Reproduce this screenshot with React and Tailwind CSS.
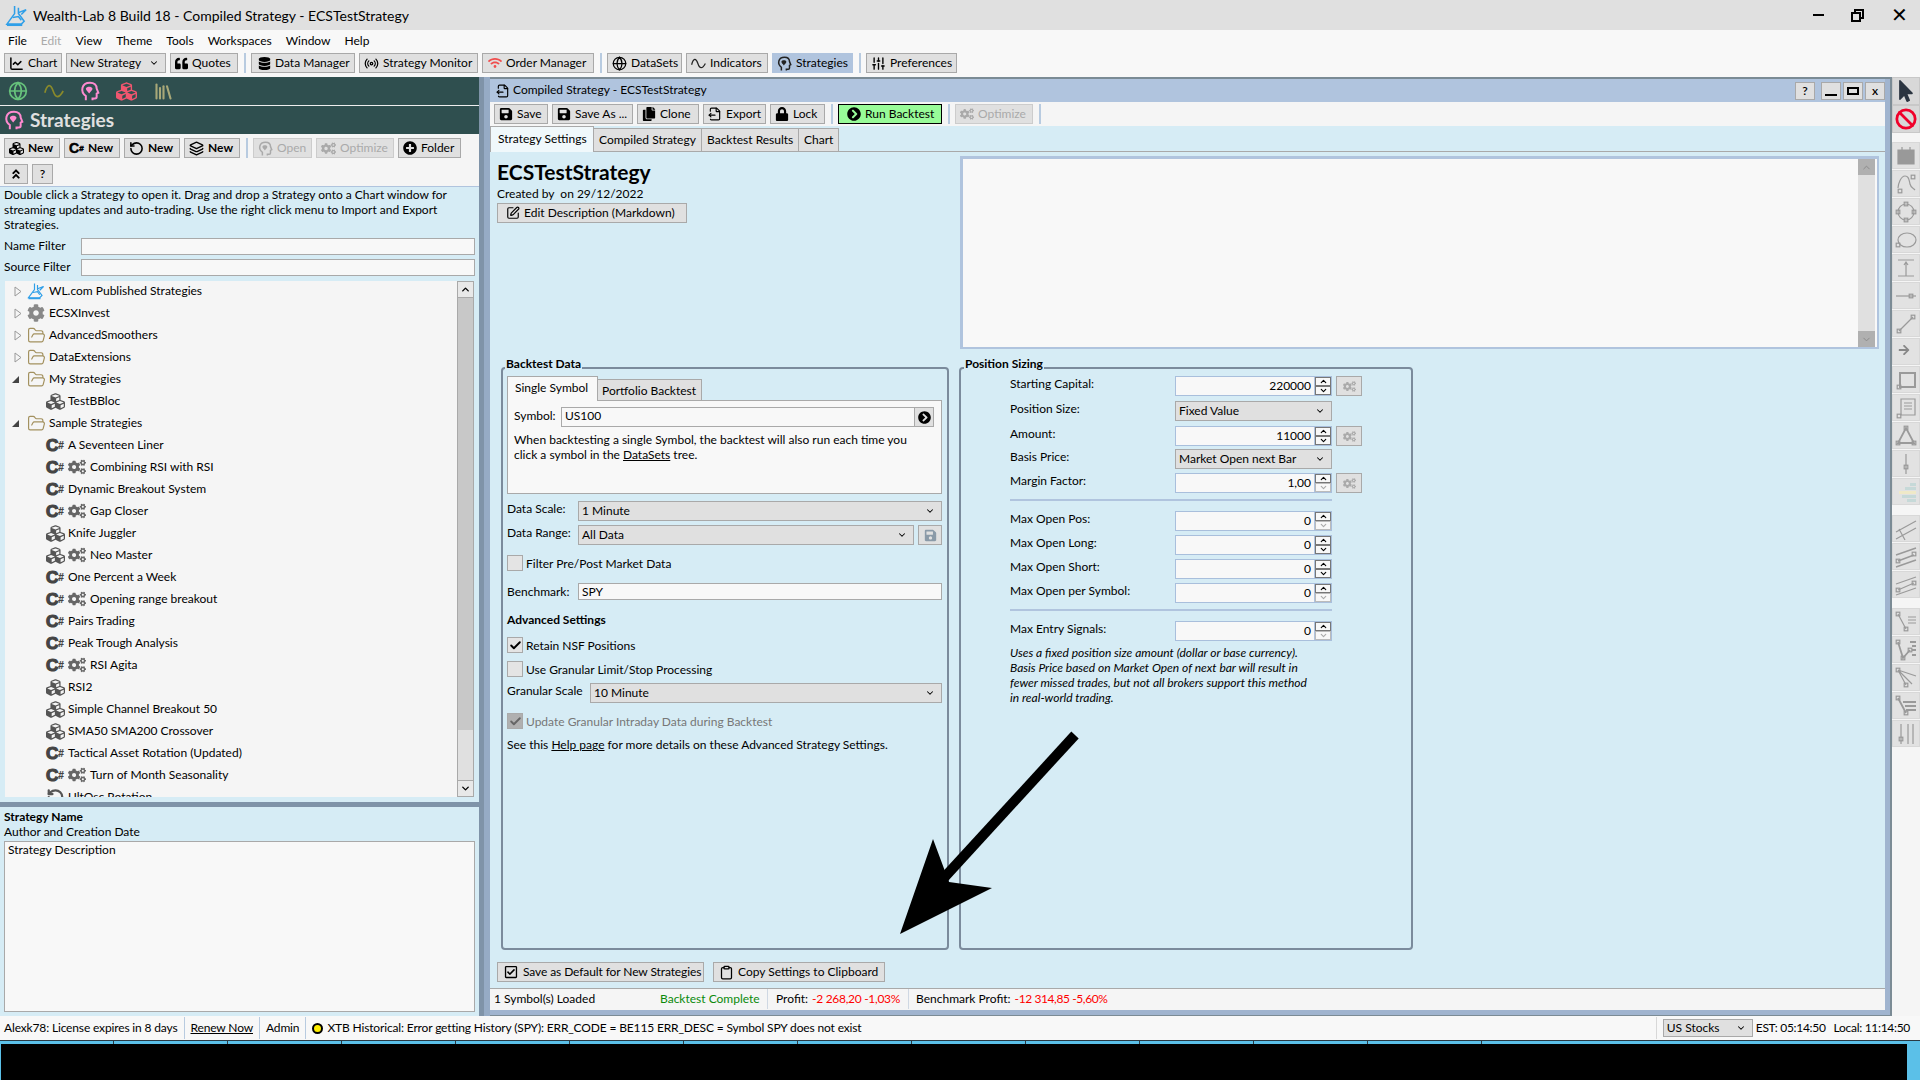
import React from 'react';
import { ChartLine, Radio, Globe, SlidersVertical, Layers, RotateCcw, FileOutput, SquarePen, FolderOpen, Clipboard, ChevronDown, ChevronUp, Library, Check, Ban } from 'lucide-react';
import { FaQuoteLeft, FaDatabase, FaWifi, FaCubes, FaCogs, FaCog, FaPlusCircle, FaAngleDoubleUp, FaSave, FaCopy, FaLock, FaChevronCircleRight, FaMousePointer, FaArrowRight, FaRegCheckSquare } from 'react-icons/fa';

const Flask = ({ size = 24 }) => (
  <svg width={size} height={size} viewBox="0 0 24 24" fill="none" stroke="#2f9fe8" strokeWidth="1.6">
    <path d="M10 2v8L2 21h15l3-3-6-8V4" />
    <path d="M14 9l8-3-5 5M8 14l6-1 3 4" />
    <path d="M2 22h16" strokeWidth="2" />
  </svg>
);

const Head = ({ size = 16, color = '#222' }) => (
  <svg width={size} height={size} viewBox="0 0 24 24" fill="none" stroke={color} strokeWidth="2.4">
    <path d="M7 23v-5C3 15 2 12 3 8c1-4 5-6 9-6 5 0 8 3 8 7l2 5-2 1v4c0 1-1 2-2 2h-3v2" />
    <path d="M7 9c1-3 7-3 8 0 0 2-2 3-4 6-2-3-4-4-4-6z" fill={color} stroke="none" />
  </svg>
);

const Wave = ({ size = 16, color = '#222' }) => (
  <svg width={size} height={size} viewBox="0 0 24 24" fill="none" stroke={color} strokeWidth="2">
    <path d="M1 14C4 3 8 3 11 12s7 9 12 0" />
  </svg>
);

const CSharp = () => (
  <span className="w-[19px] shrink-0 font-['Liberation_Sans',sans-serif] font-bold text-[17px] leading-none text-[#444] [-webkit-text-stroke:1.2px_#444]">
    C<span className="text-[10px] align-[2px] [-webkit-text-stroke:0.2px_#444]">#</span>
  </span>
);

const Sep = () => <div className="w-[2px] h-5 mx-[1.5px] bg-[#b8cbe0]" />;

const tones = {
  normal: 'border-[#a9a9a9] bg-[#e0e0e0]',
  off: 'border-[#cccccc] bg-[#e0e0e0] text-[#aaaaaa]',
  run: 'border-black bg-[#98fb98]',
  active: 'border-[#b0c4de] bg-[#b0c4de]',
};

const Btn = ({ w, icon, children, tone = 'normal', className = '' }) => (
  <div className={`${w} h-5 shrink-0 flex items-center gap-[4px] px-[4px] border whitespace-nowrap [&>svg]:shrink-0 ${tones[tone]} ${className}`}>
    {icon}
    {children}
  </div>
);

const Select = ({ w = 'flex-1', value, className = '' }) => (
  <div className={`${w} h-5 flex items-center justify-between pl-[3px] pr-[6px] border border-[#a9a9a9] bg-[#e0e0e0] ${className}`}>
    <span>{value}</span>
    <ChevronDown size={10} strokeWidth={2.5} />
  </div>
);

const Spin = ({ off }) => (
  <div className="w-[17px] flex flex-col shrink-0 border-l border-[#b0c4de]">
    <div className="h-[8px] flex-1 flex items-center justify-center border border-[#777]"><ChevronUp size={9} strokeWidth={3} /></div>
    <div className={`h-[8px] flex-1 flex items-center justify-center border ${off ? 'border-[#bbb] text-[#aaa]' : 'border-[#777]'}`}><ChevronDown size={9} strokeWidth={3} /></div>
  </div>
);

const GearBtn = () => (
  <div className="w-[26px] h-5 ml-[4px] flex items-center justify-center border border-[#a9a9a9] bg-[#e0e0e0] text-[#aaa]">
    <FaCogs size={13} />
  </div>
);

const NumRow = ({ label, value, off, gear, className = '' }) => (
  <div className={`flex h-5 ${className}`}>
    <div className="w-[165px] leading-[15px]">{label}</div>
    <div className="w-[157px] flex border border-[#a9bfdc] bg-[#f8f8f8]">
      <div className="flex-1 text-right pr-[3px] leading-[18px]">{value}</div>
      <Spin off={off} />
    </div>
    {gear && <GearBtn />}
  </div>
);

const SelRow = ({ label, value, className = '' }) => (
  <div className={`flex h-5 ${className}`}>
    <div className="w-[165px] leading-[16px]">{label}</div>
    <Select w="w-[157px]" value={value} />
  </div>
);

const CheckRow = ({ checked, off, label, className = '' }) => (
  <div className={`flex h-4 items-center gap-[3px] ${className}`}>
    <div className={`w-4 h-4 flex items-center justify-center border ${off ? 'border-[#aaa] bg-[#b0b0b0] text-[#666]' : 'border-[#a9a9a9] bg-[#e4e4e4]'}`}>
      {checked && <Check size={13} strokeWidth={3.5} />}
    </div>
    <span className={`pt-px ${off ? 'text-[#777]' : ''}`}>{label}</span>
  </div>
);

const treeRows = [
  { open: false, icon: <Flask size={18} />, name: 'WL.com Published Strategies' },
  { open: false, icon: <FaCog size={18} className="text-[#888]" />, name: 'ECSXInvest' },
  { open: false, folder: true, name: 'AdvancedSmoothers' },
  { open: false, folder: true, name: 'DataExtensions' },
  { open: true, folder: true, name: 'My Strategies' },
  { kind: 'b', name: 'TestBBloc' },
  { open: true, folder: true, name: 'Sample Strategies' },
  { kind: 'c', name: 'A Seventeen Liner' },
  { kind: 'c', gear: true, name: 'Combining RSI with RSI' },
  { kind: 'c', name: 'Dynamic Breakout System' },
  { kind: 'c', gear: true, name: 'Gap Closer' },
  { kind: 'b', name: 'Knife Juggler' },
  { kind: 'b', gear: true, name: 'Neo Master' },
  { kind: 'c', name: 'One Percent a Week' },
  { kind: 'c', gear: true, name: 'Opening range breakout' },
  { kind: 'c', name: 'Pairs Trading' },
  { kind: 'c', name: 'Peak Trough Analysis' },
  { kind: 'c', gear: true, name: 'RSI Agita' },
  { kind: 'b', name: 'RSI2' },
  { kind: 'b', name: 'Simple Channel Breakout 50' },
  { kind: 'b', name: 'SMA50 SMA200 Crossover' },
  { kind: 'c', name: 'Tactical Asset Rotation (Updated)' },
  { kind: 'c', gear: true, name: 'Turn of Month Seasonality' },
  { kind: 'r', name: 'UltOsc Rotation' },
];

const TreeRow = ({ row }) => {
  if (row.kind) {
    return (
      <div className="h-[22px] shrink-0 flex items-center pl-[41px] leading-[20px]">
        {row.kind === 'c' && <CSharp />}
        {row.kind === 'b' && <FaCubes size={19} className="w-[19px] shrink-0 text-[#555]" />}
        {row.kind === 'r' && <RotateCcw size={18} strokeWidth={3} className="w-[19px] shrink-0 text-[#555]" />}
        {row.gear && <FaCogs size={18} className="ml-[3px] shrink-0 text-[#666]" />}
        <span className={row.gear ? 'ml-[4px]' : 'ml-[3px]'}>{row.name}</span>
      </div>
    );
  }
  return (
    <div className="h-[22px] shrink-0 flex items-center pl-[7px] leading-[20px]">
      <div className="w-[15px] shrink-0">
        {row.open
          ? <div className="w-0 h-0 border-l-[7px] border-l-transparent border-b-[7px] border-b-[#444]" />
          : <svg width="9" height="11" viewBox="0 0 9 11" className="ml-[2px]"><path d="M1 1l6 4.5L1 10z" fill="#f5f5f5" stroke="#999" /></svg>}
      </div>
      <div className="w-[18px] shrink-0 flex items-center justify-center">
        {row.folder ? <FolderOpen size={19} strokeWidth={1.5} className="shrink-0 text-[#a3915f]" /> : row.icon}
      </div>
      <span className="ml-[4px]">{row.name}</span>
    </div>
  );
};

const LeftPanel = () => (
  <div className="w-[479px] shrink-0 flex flex-col bg-[#d6ecf5]">
    <div className="h-[28px] flex items-center gap-[16px] pl-[8px] bg-[#2f4f4f]">
      <Globe size={20} strokeWidth={2} className="text-[#67c27c]" />
      <Wave size={20} color="#8a8a2a" />
      <Head size={20} color="#ff8ad0" />
      <FaCubes size={21} className="text-[#f0566f]" />
      <Library size={21} strokeWidth={2.4} className="text-[#a8a878]" />
    </div>
    <div className="h-px bg-[#eee]" />
    <div className="h-[28px] flex items-center gap-[6px] pl-[4px] bg-[#2f4f4f]">
      <Head size={20} color="#ff8ad0" />
      <span className="font-bold text-[19px] text-[#e0e0e0]">Strategies</span>
    </div>
    <div className="h-[53px] flex flex-col gap-[6px] pt-[4px] pl-[4px] bg-[#f5f5f5] border-b border-[#b0c4de]">
      <div className="flex gap-[4px] items-center">
        <Btn w="w-[56px]" className="font-bold" icon={<FaCubes size={15} />}>New</Btn>
        <Btn w="w-[56px]" className="font-bold gap-[3px]" icon={<span className="w-[15px] font-['Liberation_Sans',sans-serif] font-bold text-[14px] leading-none [-webkit-text-stroke:0.5px_#000]">C<span className="text-[8px] align-[2px]">#</span></span>}>New</Btn>
        <Btn w="w-[56px]" className="font-bold" icon={<RotateCcw size={15} strokeWidth={2.5} />}>New</Btn>
        <Btn w="w-[56px]" className="font-bold" icon={<Layers size={15} strokeWidth={2.2} />}>New</Btn>
        <Sep />
        <Btn w="w-[59px]" tone="off" icon={<Head size={15} color="#aaa" />}>Open</Btn>
        <Btn w="w-[78px]" tone="off" icon={<FaCogs size={15} />}>Optimize</Btn>
        <Btn w="w-[63px]" icon={<FaPlusCircle size={14} />}>Folder</Btn>
      </div>
      <div className="flex gap-[4px]">
        <Btn w="w-[24px]" className="justify-center" icon={<FaAngleDoubleUp size={12} />} />
        <Btn w="w-[21px]" className="justify-center font-semibold">?</Btn>
      </div>
    </div>
    <div className="px-[4px] leading-[15px] h-[46px]">
      Double click a Strategy to open it. Drag and drop a Strategy onto a Chart window for streaming updates and auto-trading. Use the right click menu to Import and Export Strategies.
    </div>
    <div className="flex h-[17px] mt-[5px] pl-[4px] pr-[4px]">
      <span className="w-[77px] leading-[15px]">Name Filter</span>
      <div className="flex-1 border border-[#a9a9a9] bg-[#f8f8f8]" />
    </div>
    <div className="flex h-[17px] mt-[4px] pl-[4px] pr-[4px]">
      <span className="w-[77px] leading-[15px]">Source Filter</span>
      <div className="flex-1 border border-[#a9a9a9] bg-[#f8f8f8]" />
    </div>
    <div className="flex h-[516px] mt-[5px] ml-[5px] mr-[5px] bg-[#f5f5f5]">
      <div className="flex-1 flex flex-col overflow-hidden">
        <div className="-mt-px flex flex-col">
          {treeRows.map((row) => <TreeRow key={row.name} row={row} />)}
        </div>
      </div>
      <div className="w-[17px] flex flex-col border border-[#a9a9a9] bg-[#e0e0e0]">
        <div className="h-[16px] flex items-center justify-center bg-[#e8e8e8] border-b border-[#a9a9a9]"><ChevronUp size={11} strokeWidth={3} /></div>
        <div className="h-[432px] bg-[#c8c8c8]" />
        <div className="flex-1" />
        <div className="h-[16px] flex items-center justify-center bg-[#e8e8e8] border-t border-[#a9a9a9]"><ChevronDown size={11} strokeWidth={3} /></div>
      </div>
    </div>
    <div className="h-[5px] mt-[5px] bg-[#7f93a8]" />
    <div className="pl-[4px] pt-[2px] font-bold leading-[16px]">Strategy Name</div>
    <div className="pl-[4px] h-[15px] leading-[13px]">Author and Creation Date</div>
    <div className="mt-[1px] ml-[4px] mr-[4px] h-[171px] px-[3px] border border-[#a9a9a9] bg-[#f8f8f8] leading-[16px]">Strategy Description</div>
  </div>
);

const BacktestData = () => (
  <div className="w-[448px] border-2 border-[#7b8b9c] rounded-[4px] pl-[4px] pr-[5px]">
    <div className="w-fit -mt-[13px] -ml-[2px] h-4 px-[1px] bg-[#d6ecf5] font-bold leading-[16px]">Backtest Data</div>
    <div className="flex items-end mt-[3px] h-[25px]">
      <div className="w-[91px] h-[25px] pl-[7px] leading-[22px] border border-b-0 border-[#a9a9a9] bg-[#f8f8f8] relative z-10 -mb-px">Single Symbol</div>
      <div className="w-[104px] h-[21px] pl-[4px] leading-[21px] border border-l-0 border-b-0 border-[#a9a9a9] bg-[#e0e0e0]">Portfolio Backtest</div>
    </div>
    <div className="h-[94px] border border-[#a9a9a9] bg-[#f8f8f8] px-[6px] pt-[6px]">
      <div className="flex h-5">
        <span className="w-[47px] leading-[17px]">Symbol:</span>
        <div className="w-[354px] pl-[3px] leading-[16px] border border-[#a9a9a9]">US100</div>
        <div className="w-[19px] flex items-center justify-center border border-l-0 border-[#a9a9a9] bg-[#e0e0e0]"><FaChevronCircleRight size={13} /></div>
      </div>
      <div className="mt-[5px] leading-[15px]">
        When backtesting a single Symbol, the backtest will also run each time you<br />
        click a symbol in the <span className="underline">DataSets</span> tree.
      </div>
    </div>
    <div className="flex mt-[7px]">
      <span className="w-[71px] leading-[16px]">Data Scale:</span>
      <Select value="1 Minute" />
    </div>
    <div className="flex mt-[4px]">
      <span className="w-[71px] leading-[16px]">Data Range:</span>
      <Select value="All Data" />
      <div className="w-[24px] ml-[4px] flex items-center justify-center border border-[#a9a9a9] bg-[#e0e0e0] text-[#8a9aa8]"><FaSave size={13} /></div>
    </div>
    <CheckRow label="Filter Pre/Post Market Data" className="mt-[10px]" />
    <div className="flex mt-[12px] h-[17px]">
      <span className="w-[71px] leading-[17px]">Benchmark:</span>
      <div className="flex-1 pl-[3px] leading-[16px] border border-[#a9a9a9] bg-[#f8f8f8]">SPY</div>
    </div>
    <div className="mt-[12px] font-bold leading-[16px]">Advanced Settings</div>
    <CheckRow checked label="Retain NSF Positions" className="mt-[9px]" />
    <CheckRow label="Use Granular Limit/Stop Processing" className="mt-[8px]" />
    <div className="flex mt-[6px]">
      <span className="w-[83px] leading-[16px]">Granular Scale</span>
      <Select value="10 Minute" />
    </div>
    <CheckRow checked off label="Update Granular Intraday Data during Backtest" className="mt-[10px]" />
    <div className="mt-[8px] leading-[16px]">
      See this <span className="underline">Help page</span> for more details on these Advanced Strategy Settings.
    </div>
  </div>
);

const PositionSizing = () => (
  <div className="w-[454px] border-2 border-[#7b8b9c] rounded-[4px] pl-[49px]">
    <div className="w-fit -mt-[13px] -ml-[46px] h-4 px-[1px] bg-[#d6ecf5] font-bold leading-[16px]">Position Sizing</div>
    <NumRow label="Starting Capital:" value="220000" gear className="mt-[4px]" />
    <SelRow label="Position Size:" value="Fixed Value" className="mt-[5px]" />
    <NumRow label="Amount:" value="11000" gear className="mt-[5px]" />
    <SelRow label="Basis Price:" value="Market Open next Bar" className="mt-[3px]" />
    <NumRow label="Margin Factor:" value="1,00" off gear className="mt-[4px]" />
    <div className="w-[322px] h-[2px] mt-[6px] bg-[#b0c4de]" />
    <NumRow label="Max Open Pos:" value="0" off className="mt-[10px]" />
    <NumRow label="Max Open Long:" value="0" className="mt-[4px]" />
    <NumRow label="Max Open Short:" value="0" className="mt-[4px]" />
    <NumRow label="Max Open per Symbol:" value="0" off className="mt-[4px]" />
    <div className="w-[322px] h-[2px] mt-[6px] bg-[#b0c4de]" />
    <NumRow label="Max Entry Signals:" value="0" off className="mt-[10px]" />
    <div className="mt-[4px] italic leading-[15px] whitespace-nowrap">
      Uses a fixed position size amount (dollar or base currency).<br />
      Basis Price based on Market Open of next bar will result in<br />
      fewer missed trades, but not all brokers support this method<br />
      in real-world trading.
    </div>
  </div>
);

const StrategyWindow = () => (
  <div className="flex-1 flex flex-col border-t-2 border-t-[#7b8b95] border-r-2 border-b border-r-[#7b8b95] border-b-[#7b8b95]">
    <div className="flex-1 flex flex-col border-r-[5px] border-b-[5px] border-[#a0b4cf] bg-[#d6ecf5]">
      <div className="h-[23px] shrink-0 flex items-center pl-[6px] bg-[#b0c4de]">
        <FileOutput size={14} className="mr-[3px]" />
        <span className="-mt-[2px]">Compiled Strategy - ECSTestStrategy</span>
        <div className="ml-auto flex items-center">
          <div className="w-5 h-[18px] flex items-center justify-center border border-[#a9a9a9] bg-[#e0e0e0] font-semibold">?</div>
          <div className="w-5 h-[18px] ml-[6px] flex items-end justify-center pb-[3px] border border-[#a9a9a9] bg-[#e0e0e0]"><div className="w-3 h-[2px] bg-black" /></div>
          <div className="w-5 h-[18px] ml-[2px] flex items-center justify-center border border-[#a9a9a9] bg-[#e0e0e0]"><div className="w-3 h-2 border-2 border-black" /></div>
          <div className="w-5 h-[18px] ml-[2px] flex items-center justify-center border border-[#a9a9a9] bg-[#e0e0e0] font-semibold">x</div>
        </div>
      </div>
      <div className="h-[24px] shrink-0 flex items-center gap-[4px] pl-[4px] bg-[#f5f5f5]">
        <Btn w="w-[54px]" icon={<FaSave size={14} />}>Save</Btn>
        <Btn w="w-[81px]" icon={<FaSave size={14} />}>Save As ...</Btn>
        <Btn w="w-[62px]" icon={<FaCopy size={14} />}>Clone</Btn>
        <Btn w="w-[63px]" icon={<FileOutput size={14} />}>Export</Btn>
        <Btn w="w-[55px]" icon={<FaLock size={14} />}>Lock</Btn>
        <Sep />
        <Btn w="w-[104px]" tone="run" className="pl-[8px]" icon={<FaChevronCircleRight size={14} />}>Run Backtest</Btn>
        <Sep />
        <Btn w="w-[78px]" tone="off" icon={<FaCogs size={14} />}>Optimize</Btn>
        <Sep />
      </div>
      <div className="h-[26px] shrink-0 flex items-end border-b border-[#a9a9a9]">
        <div className="w-[104px] h-[26px] pl-[7px] leading-[24px] border border-b-0 border-[#a9a9a9] bg-[#f0f8fb] relative -mb-px z-10">Strategy Settings</div>
        <div className="w-[108px] h-[23px] pl-[5px] leading-[22px] border-r border-t border-[#a9a9a9] bg-[#e0e0e0]">Compiled Strategy</div>
        <div className="w-[97px] h-[23px] pl-[5px] leading-[22px] border-r border-t border-[#a9a9a9] bg-[#e0e0e0]">Backtest Results</div>
        <div className="w-[40px] h-[23px] pl-[5px] leading-[22px] border-r border-t border-[#a9a9a9] bg-[#e0e0e0]">Chart</div>
      </div>
      <div className="flex h-[193px] mt-[4px] shrink-0">
        <div className="w-[470px] pl-[7px] shrink-0">
          <div className="text-[21px] font-bold leading-[26px] mt-[3px]">ECSTestStrategy</div>
          <div className="mt-[1px] leading-[16px]">Created by&nbsp; on 29/12/2022</div>
          <Btn w="w-[190px]" className="mt-[1px] pl-[8px]" icon={<SquarePen size={14} />}>Edit Description (Markdown)</Btn>
        </div>
        <div className="w-[919px] flex justify-end border-[3px] border-[#b0c4de] border-r-2 border-b-2 bg-[#f8f8f8]">
          <div className="w-[17px] mr-[2px] flex flex-col bg-[#e0e0e0]">
            <div className="h-[16px] flex items-center justify-center bg-[#b0b0b0] text-[#888]"><ChevronUp size={11} /></div>
            <div className="flex-1" />
            <div className="h-[16px] flex items-center justify-center bg-[#b0b0b0] text-[#888]"><ChevronDown size={11} /></div>
          </div>
        </div>
      </div>
      <div className="flex h-[583px] mt-[18px] ml-[11px] gap-[10px] shrink-0">
        <BacktestData />
        <PositionSizing />
      </div>
      <div className="flex gap-[9px] mt-[12px] ml-[7px]">
        <Btn w="w-[207px]" className="pl-[6px] gap-[5px] tracking-[-0.1px]" icon={<FaRegCheckSquare size={14} />}>Save as Default for New Strategies</Btn>
        <Btn w="w-[172px]" className="pl-[5px] gap-[3px]" icon={<Clipboard size={15} strokeWidth={2} />}>Copy Settings to Clipboard</Btn>
      </div>
      <div className="h-[22px] mt-[6px] flex items-center pb-[2px] bg-[#f5f5f5] border-t border-[#a9a9a9] pl-[4px]">
        <span className="w-[166px]">1 Symbol(s) Loaded</span>
        <span className="w-[107px] text-[#0a8a0a]">Backtest Complete</span>
        <div className="w-px h-[20px] bg-[#cfd8e3]" />
        <span className="ml-[8px]">Profit:</span>
        <span className="ml-[4px] text-[#f00] tracking-[-0.3px]">-2 268,20 -1,03%</span>
        <div className="w-px h-[20px] ml-[8px] bg-[#cfd8e3]" />
        <span className="ml-[7px]">Benchmark Profit:</span>
        <span className="ml-[4px] text-[#f00] tracking-[-0.4px]">-12 314,85 -5,60%</span>
      </div>
    </div>
  </div>
);

// side toolbar drawings, all on a 24 box
const N = ({ x, y }) => <rect x={x - 1.8} y={y - 1.8} width="3.6" height="3.6" />;

const toolGroups = [
  [
    <path d="M4 9h16v11H4zM4 9V6h16v3M8 3v3M16 3v3" fill="#999" stroke="#999" />,
    <g><path d="M4 16c0-4 3-12 7-12s4 4 5 8 3 4 5 6" /><N x={6} y={19} /><N x={19} y={5} /></g>,
    <g><circle cx="12" cy="12" r="8" /><N x={12} y={4} /><N x={12} y={20} /><N x={4} y={12} /><N x={20} y={12} /></g>,
    <g><ellipse cx="13" cy="12" rx="9" ry="7" /><N x={4} y={17} /></g>,
    <path d="M4 4h16M4 20h16M12 20V7M10 9l2-3 2 3" />,
    <g><path d="M2 12h20" /><N x={17} y={12} /></g>,
    <g><path d="M5 19L19 5" /><N x={5} y={19} /><N x={19} y={5} /></g>,
    <FaArrowRight x="4" y="4" width="16" height="16" color="#888" />,
    <g><path d="M6 5h15v14H6z" strokeWidth="2" /><N x={5} y={19} /></g>,
    <g><path d="M7 3h14v16H7zM10 7h8M10 10h8M10 13h8" /><N x={5} y={20} /></g>,
    <g><path d="M12 4L4 19h16z" strokeWidth="1.8" /><N x={12} y={4} /><N x={4} y={19} /><N x={20} y={19} /></g>,
    <g><path d="M12 2v20" /><N x={12} y={15} /></g>,
    <g fill="#c6d9d8" stroke="none"><path d="M16 3h6v3h-6zM11 7h11v3H11z" /><path d="M5 11h17v3H5z" fill="#efe9c8" /><path d="M8 15h14v3H8z" /><path d="M13 19h9v3h-9z" /></g>,
  ],
  [
    <path d="M2 15L22 4M2 22L22 11M5 12l6 11" />,
    <g><path d="M2 10L22 3M2 22L22 15M4 16l16-6" strokeWidth="1.5" /><N x={4} y={16} /><N x={20} y={9} /></g>,
    <g><path d="M2 11L22 4M2 22L22 15M4 17l16-7" /><N x={4} y={17} /><N x={20} y={10} /></g>,
  ],
  [
    <g><path d="M4 4l8 15M14 7h8M14 10h8M14 13h8" /><N x={4} y={4} /><N x={12} y={19} /></g>,
    <g><path d="M4 4l5 16 7-8M16 4h6M18 8h4M18 12h4M18 17h4" strokeWidth="1.8" /><N x={4} y={4} /><N x={9} y={20} /><N x={16} y={12} /></g>,
    <g><path d="M4 4l8 15M4 4l18 6M4 4l14 14" /><N x={4} y={4} /><N x={12} y={19} /></g>,
    <g><path d="M4 4l8 15M9 8h13M11 12h11M12 16h10" strokeWidth="1.8" /><N x={4} y={4} /><N x={12} y={19} /></g>,
    <g><path d="M7 2v20M14 2v20M19 2v20" /><N x={7} y={17} /></g>,
  ],
];

const SideToolbar = () => (
  <div className="w-[28px] shrink-0 flex flex-col bg-[#f5f5f5]">
    <div className="h-[28px] flex items-center justify-center bg-[#d8d8d8] border border-[#c8c8c8]"><FaMousePointer size={22} className="text-[#2b3440]" /></div>
    <div className="h-[28px] flex items-center justify-center bg-[#d8d8d8] border border-[#c8c8c8]"><Ban size={22} strokeWidth={3} className="text-[#f0002a]" /></div>
    {toolGroups.map((group, i) => (
      <div key={i} className={`${i === 0 ? 'mt-[9px]' : 'mt-[10px]'} flex flex-col gap-px`}>
        {group.map((d, j) => (
          <div key={j} className="h-[27px] flex items-center justify-center bg-[#e2e2e2] border border-[#d8d8d8]">
            <svg width="24" height="24" viewBox="0 0 24 24" fill="none" stroke="#9a9a9a" strokeWidth="1.2">{d}</svg>
          </div>
        ))}
      </div>
    ))}
  </div>
);

const menus = ['File', 'Edit', 'View', 'Theme', 'Tools', 'Workspaces', 'Window', 'Help'];

export default function App() {
  return (
    <div className="relative w-[1920px] h-[1080px] overflow-hidden flex flex-col bg-[#f8f8f8] text-black text-[12px] font-['Lato',sans-serif]">
      <div className="h-[30px] shrink-0 flex items-center pl-[5px] bg-[#e0e0e0]">
        <Flask size={23} />
        <span className="ml-[5px] text-[14px]">Wealth-Lab 8 Build 18 - Compiled Strategy - ECSTestStrategy</span>
        <div className="ml-auto flex items-center gap-[27px] pr-[12px]">
          <div className="w-[11px] h-[2px] bg-black" />
          <div className="relative w-[13px] h-[13px]">
            <div className="absolute right-0 top-0 w-[10px] h-[10px] border-2 border-black" />
            <div className="absolute left-0 bottom-0 w-[10px] h-[10px] border-2 border-black bg-[#e0e0e0]" />
          </div>
          <div className="text-[20px] leading-none font-['Liberation_Sans',sans-serif]">✕</div>
        </div>
      </div>
      <div className="h-[23px] shrink-0 flex items-center gap-[14px] pl-[8px] pb-[2px]">
        {menus.map((m) => <span key={m} className={m === 'Edit' ? 'text-[#aaa]' : ''}>{m}</span>)}
      </div>
      <div className="h-[24px] shrink-0 flex items-start gap-[4px] pl-[4px]">
        <Btn w="w-[58px]" icon={<ChartLine size={15} strokeWidth={2.4} />}>Chart</Btn>
        <Select w="w-[100px]" value="New Strategy" />
        <Btn w="w-[68px]" icon={<FaQuoteLeft size={13} />}>Quotes</Btn>
        <Sep />
        <Btn w="w-[104px]" className="pl-[6px]" icon={<FaDatabase size={13} />}>Data Manager</Btn>
        <Btn w="w-[119px]" icon={<Radio size={15} />}>Strategy Monitor</Btn>
        <Btn w="w-[112px]" className="pl-[5px]" icon={<FaWifi size={14} className="text-[#f04e4e]" />}>Order Manager</Btn>
        <Sep />
        <Btn w="w-[75px]" icon={<Globe size={15} />}>DataSets</Btn>
        <Btn w="w-[82px]" icon={<Wave size={15} />}>Indicators</Btn>
        <Btn w="w-[81px]" tone="active" icon={<Head size={15} />}>Strategies</Btn>
        <Sep />
        <Btn w="w-[91px]" icon={<SlidersVertical size={15} strokeWidth={2.2} />}>Preferences</Btn>
      </div>
      <div className="h-[939px] shrink-0 flex">
        <LeftPanel />
        <div className="w-[5px] shrink-0 bg-[#7f93a8]" />
        <div className="w-[6px] shrink-0 bg-[#96abc5]" />
        <StrategyWindow />
        <SideToolbar />
      </div>
      <div className="h-[24px] shrink-0 flex items-center pl-[4px]">
        <span className="tracking-[-0.15px]">Alexk78: License expires in 8 days</span>
        <div className="w-px h-[22px] mx-[6px] bg-[#b8cbe0]" />
        <span className="underline tracking-[-0.15px]">Renew Now</span>
        <div className="w-px h-[22px] mx-[6px] bg-[#b8cbe0]" />
        <span className="tracking-[-0.15px]">Admin</span>
        <div className="w-px h-[22px] mx-[6px] bg-[#b8cbe0]" />
        <div className="w-[11px] h-[11px] rounded-full bg-[#ffee00] border-2 border-black" />
        <span className="ml-[4px] tracking-[-0.15px]">XTB Historical: Error getting History (SPY): ERR_CODE = BE115 ERR_DESC = Symbol SPY does not exist</span>
        <div className="ml-auto w-px h-[22px] bg-[#d8d8d8]" />
        <Select w="w-[90px] ml-[6px] h-[18px]" value="US Stocks" />
        <span className="ml-[3px] tracking-[-0.3px]">EST: 05:14:50</span>
        <span className="ml-[8px] mr-[10px] tracking-[-0.3px]">Local: 11:14:50</span>
      </div>
      <div className="h-[4px] shrink-0 flex bg-[#5bc0e8] border-t border-[#2a3a44]">
        {Array.from({ length: 13 }).map((_, i) => <div key={i} className="w-[114px] border-r border-[#2a3a44]" />)}
      </div>
      <div className="flex-1 flex bg-[#5bc0e8]">
        <div className="w-[1906px] ml-[1px] bg-black" />
      </div>
      {/* big annotation arrow drawn over the form */}
      <svg className="absolute left-[880px] top-[720px]" width="210" height="225" viewBox="0 0 210 225">
        <path d="M195 15L62 160" stroke="black" strokeWidth="10" />
        <polygon points="20,214 53,119 69,162 112,168" fill="black" />
      </svg>
    </div>
  );
}
